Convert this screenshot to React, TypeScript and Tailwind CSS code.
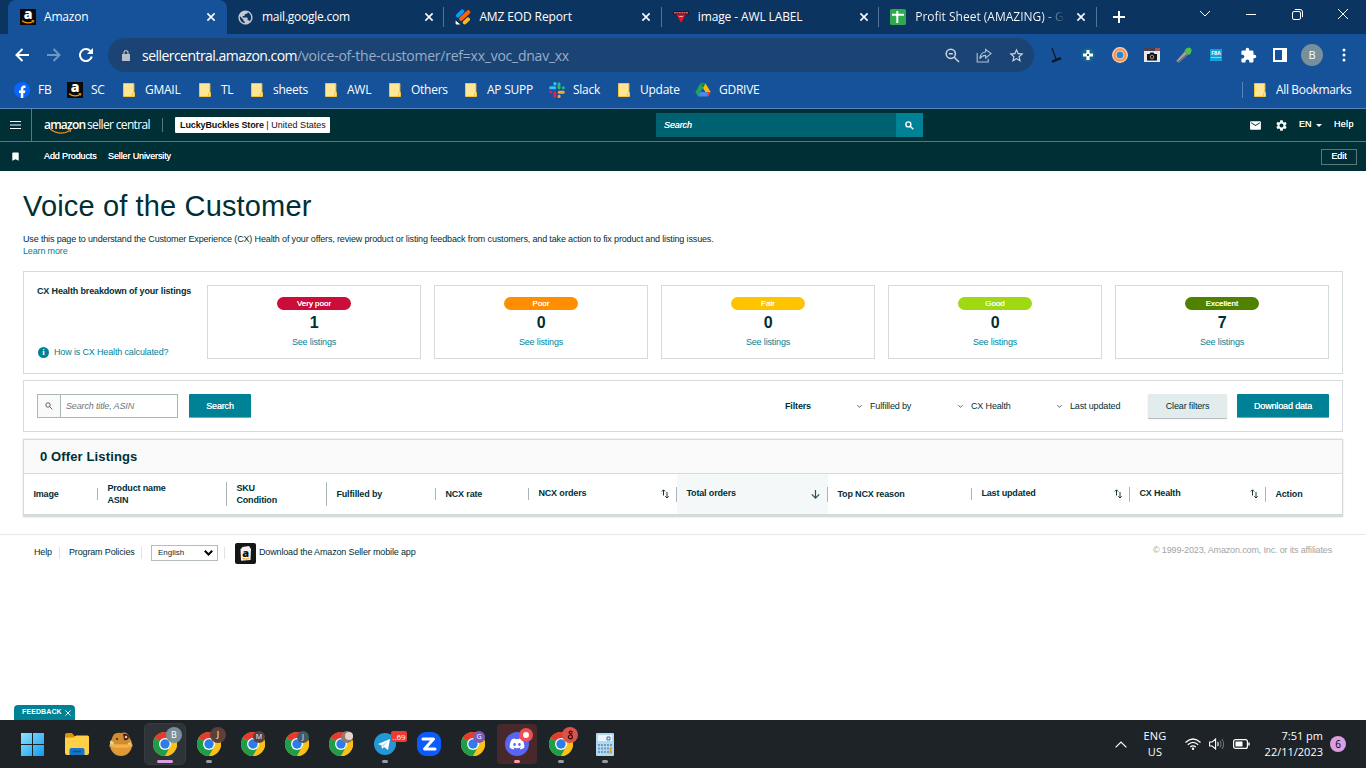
import type { ReactNode } from 'react'
import { MdStarBorder, MdExtension, MdEmail, MdSettings, MdBookmark, MdPublic } from 'react-icons/md'
import { FaDiscord } from 'react-icons/fa'

function AmazonIcon() {
    return (
        <svg width="16" height="16" viewBox="0 0 16 16">
            <rect width="16" height="16" fill="#0a0a0a" />
            <text x="8" y="10.4" textAnchor="middle" fontSize="14" fontWeight="800" fill="#fff" fontFamily="Open Sans, sans-serif">a</text>
            <path d="M2 11.8c3.6 2.6 8 2.6 11.4.4" stroke="#f90" strokeWidth="1.3" fill="none" />
            <path d="M11.6 11.6h2.4l-.6 2" stroke="#f90" strokeWidth="0.9" fill="none" />
        </svg>
    )
}

function FacebookIcon() {
    return (
        <svg width="16" height="16" viewBox="0 0 16 16">
            <circle cx="8" cy="8" r="8" fill="#0866ff" />
            <path d="M6.8 16v-5H5V8.6h1.8V7.3c0-2.6 1.3-3.7 3.2-3.7.7 0 1.2.1 1.5.2v2.1h-.9c-.9 0-1.3.4-1.3 1.2v1.5h2.1l-.4 2.4H9.3V16z" fill="#fff" />
        </svg>
    )
}

function JotformIcon() {
    return (
        <svg width="16" height="16" viewBox="0 0 16 16" strokeLinecap="round" strokeWidth="4">
            <path d="M3 6.6 7.2 2.4" stroke="#0a9bff" />
            <path d="M6.2 9.8 13.2 3.2" stroke="#ff6100" />
            <path d="M9.8 13.4 13 10.4" stroke="#ffb629" />
            <path d="M.6 11.6v3.2q0 .8.8.8h3.8z" fill="#fff" />
        </svg>
    )
}

function LabelIcon() {
    return (
        <svg width="16" height="16" viewBox="0 0 16 16">
            <path d="M0 2h16v3.500H0z" fill="#2b1220" />
            <path d="M1 3.7h14" stroke="#d8606a" strokeWidth="1.4" strokeDasharray="2 .4" />
            <path d="M3.4 5.5h9.2L8.2 14z" fill="#f0101c" />
            <path d="M6 7.5h4" stroke="#f8a0a0" />
        </svg>
    )
}

function SheetIcon() {
    return (
        <svg width="16" height="16" viewBox="0 0 16 16">
            <rect width="16" height="16" rx="1.6" fill="#2fa84f" />
            <path d="M2 5.8h12M7.3 2v12" stroke="#fff" strokeWidth="2" />
        </svg>
    )
}

function Folder() {
    return (
        <svg width="12" height="14" viewBox="0 0 12 14">
            <path d="M.5.5h10.4v9h.6v4H.5z" fill="#ffe694" stroke="#f0c544" />
            <path d="M9.5 10v3.5" stroke="#f0c544" />
        </svg>
    )
}

function SlackIcon() {
    return (
        <svg width="16" height="16" viewBox="0 0 16 16" strokeLinecap="round" strokeWidth="3">
            <path d="M1.6 5.7h4M5.9 1.6v.3" stroke="#36c5f0" />
            <path d="M10 1.7v4M14.3 5.8h.1" stroke="#2eb67d" />
            <path d="M10.3 10.2h4M10.1 14.3v.1" stroke="#ecb22e" />
            <path d="M5.9 10.4v4M1.7 10.1h.1" stroke="#e01e5a" />
        </svg>
    )
}

function DriveIcon() {
    return (
        <svg width="16" height="14" viewBox="0 0 16 14">
            <path d="M5.3.5 8 5 3 13.4.4 9z" fill="#1ea362" />
            <path d="M5.3.5h5.2L15.7 9h-5.3z" fill="#ffba00" />
            <path d="M5.3.5h5.2L8 5z" fill="#188038" />
            <path d="M5.5 9h10.2L13 13.5H3z" fill="#4688f4" />
            <path d="m12.8 13.4 2.9-4.4h-3.8z" fill="#ea4335" />
        </svg>
    )
}

function Close() {
    return (
        <svg width="10" height="10" viewBox="0 0 10 10">
            <path d="m1.4 1.4 7.2 7.2m0-7.2L1.4 8.6" stroke="#fff" strokeWidth="1.6" />
        </svg>
    )
}

function SearchGlyph({ size, color, width = 2 }: { size: number; color: string; width?: number }) {
    return (
        <svg width={size} height={size} viewBox="0 0 16 16" fill="none" stroke={color} strokeWidth={width}>
            <circle cx="6" cy="6" r="4.4" />
            <path d="m9.3 9.3 5.4 5.4" />
        </svg>
    )
}

const tabs = [
    { title: 'mail.google.com', icon: <MdPublic size={17} color="#c3c8ce" className="-ml-px" />, cls: 'tracking-[-0.02em]' },
    { title: 'AMZ EOD Report', icon: <JotformIcon />, cls: 'tracking-[-0.01em]' },
    { title: 'image - AWL LABEL', icon: <LabelIcon />, cls: '-mr-px ml-px tracking-[-0.01em]' },
    { title: 'Profit Sheet (AMAZING) - Go', icon: <SheetIcon />, cls: '-mr-px ml-px bg-linear-to-r from-white from-85% to-transparent bg-clip-text text-transparent' },
]

function TabStrip() {
    return (
        <div className="flex h-[34px] bg-[#0c3461] pl-2 text-[12px] text-white">
            <div className="flex w-[219px] items-center rounded-t-lg bg-[#15529a] pl-3">
                <AmazonIcon />
                <span className="ml-2 w-[162px] tracking-[-0.2px]">Amazon</span>
                <Close />
            </div>
            {tabs.map((t) => (
                <div key={t.title} className="flex w-[217.4px] items-center pl-[11px]">
                    <span className="flex w-6 shrink-0">{t.icon}</span>
                    <span className={'w-[150px] shrink-0 overflow-hidden whitespace-nowrap ' + t.cls}>{t.title}</span>
                    <span className="ml-3"><Close /></span>
                    <span className="ml-auto h-5 w-px bg-[#53749a]" />
                </div>
            ))}
            <div className="flex w-11 items-center justify-center">
                <svg width="12" height="12" viewBox="0 0 12 12"><path d="M6 0v12M0 6h12" stroke="#fff" strokeWidth="2" /></svg>
            </div>
            <div className="ml-auto flex h-7 items-center">
                <div className="flex w-[46px] justify-center">
                    <svg width="12" height="8" viewBox="0 0 12 8" fill="none" stroke="#fff"><path d="m1 1 5 5 5-5" /></svg>
                </div>
                <div className="flex w-[46px] justify-center"><span className="h-px w-[10px] bg-white" /></div>
                <div className="flex w-[46px] justify-center">
                    <svg width="11" height="11" viewBox="0 0 11 11" fill="none" stroke="#fff">
                        <rect x=".5" y="2.5" width="8" height="8" rx="1.5" />
                        <path d="M2.8.5H8Q10.5.5 10.5 3v5.2" />
                    </svg>
                </div>
                <div className="flex w-[46px] justify-center">
                    <svg width="12" height="12" viewBox="0 0 12 12" stroke="#fff"><path d="m1 1 10 10M11 1 1 11" /></svg>
                </div>
            </div>
        </div>
    )
}

function Slot({ children }: { children: ReactNode }) {
    return <div className="flex w-8 shrink-0 items-center justify-center">{children}</div>
}

function Toolbar() {
    return (
        <div className="flex h-[42px] items-center pl-1.5">
            <Slot>
                <svg width="14" height="14" viewBox="0 0 14 14" fill="none" stroke="#fff" strokeWidth="2"><path d="M14 7H1.5M7.5 1 1.5 7l6 6" /></svg>
            </Slot>
            <Slot>
                <svg width="14" height="14" viewBox="0 0 14 14" fill="none" stroke="#6f97c5" strokeWidth="2"><path d="M0 7h12.5M6.5 1l6 6-6 6" /></svg>
            </Slot>
            <Slot>
                <svg width="14" height="14" viewBox="0 0 14 14" fill="none" stroke="#fff" strokeWidth="2"><path d="M11.4 3A6 6 0 1 0 12.8 8.6" /><path d="M14 0v6H8z" fill="#fff" stroke="none" /></svg>
            </Slot>
            <div className="ml-1.5 flex h-[34px] w-[926px] items-center rounded-full bg-[#1b4474] pl-[14px]">
                <svg width="8" height="11" viewBox="0 0 8 11"><path d="M0 4h8v7H0z" fill="#b9bfc6" /><path d="M2 4.5V2.6a2 2 0 0 1 4 0v1.9" fill="none" stroke="#b9bfc6" strokeWidth="1.2" /></svg>
                <span className="ml-3 text-[14px] tracking-[-0.54px] text-white">sellercentral.amazon.com</span>
                <span className="text-[14px] tracking-[-0.24px] text-[#98adc7]">/voice-of-the-customer/ref=xx_voc_dnav_xx</span>
                <div className="mr-0.5 ml-auto flex">
                    <Slot>
                        <svg width="15" height="15" viewBox="0 0 15 15" fill="none" stroke="#ccd5e0" strokeWidth="1.5"><circle cx="5.8" cy="5.8" r="4.6" /><path d="m9.2 9.2 4.8 4.8M3.8 5.8h4" /></svg>
                    </Slot>
                    <Slot>
                        <svg width="16" height="15" viewBox="0 0 16 15" fill="none" stroke="#b4c2d2" strokeWidth="1.1"><path d="M1.2 5v9h11v-3.2" /><path d="M9.6 1.4 15 5.6 9.6 10V7.4Q6 7.2 3.8 10.8 4.2 4.6 9.6 4z" /></svg>
                    </Slot>
                    <Slot><MdStarBorder size={17} color="#ccd5e0" /></Slot>
                </div>
            </div>
            <div className="ml-1.5 flex">
                <Slot>
                    <svg width="14" height="15" viewBox="0 0 14 15" fill="none" stroke="#0b1626"><path d="M3 0l4 11" strokeWidth="1.2" /><path d="m3 13.6 9-3.4" strokeWidth="2.4" /></svg>
                </Slot>
                <Slot>
                    <svg width="14" height="14" viewBox="0 0 14 14"><circle cx="7" cy="7" r="7" fill="#17648a" /><path d="M7 2v10M2 7h10" stroke="#fff" strokeWidth="3.2" /><path d="M6 6h2v2H6z" fill="#17648a" /></svg>
                </Slot>
                <Slot>
                    <svg width="16" height="16" viewBox="0 0 16 16"><circle cx="8" cy="8" r="7.3" fill="#f79250" stroke="#fbd3b8" strokeWidth="1.3" /><circle cx="8" cy="8" r="4" fill="#1b8be0" stroke="#fdc9a4" /></svg>
                </Slot>
                <Slot>
                    <svg width="16" height="14" viewBox="0 0 16 14"><rect width="16" height="14" fill="#e8e8e8" /><path d="M0 0h16v3H0z" fill="#494050" /><path d="M11 0h5v3h-5z" fill="#a4545c" /><path d="M3 6h2.5l1-1.4h3l1 1.4H13v6.4H3z" fill="#151515" /><circle cx="8" cy="9" r="1.8" fill="none" stroke="#bbb" strokeWidth=".8" /></svg>
                </Slot>
                <Slot>
                    <svg width="16" height="16" viewBox="0 0 16 16"><path d="m.3 14 8.5-9.5 3.2 3-9.5 8.3z" fill="#a7a29d" /><path d="m1.5 15.3 9.5-8" stroke="#5b5650" /><path d="M8.5 4Q10 .4 13 .4 16 1 15.6 4 15 7 12.3 8z" fill="#4fc14a" /></svg>
                </Slot>
                <Slot>
                    <div className="h-3 w-3 bg-[#13a0d8] text-center text-[5px] leading-[8px] font-bold text-white">FBA<div className="mx-px h-px bg-[#8ad2ee]" /></div>
                </Slot>
                <Slot><MdExtension size={17} color="#fff" /></Slot>
                <Slot>
                    <svg width="14" height="14" viewBox="0 0 14 14"><path d="M1 1h12v12H1z" fill="none" stroke="#fff" strokeWidth="2" /><path d="M9 0h5v14H9z" fill="#fff" /></svg>
                </Slot>
                <Slot>
                    <div className="h-[22px] w-[22px] rounded-full bg-[#78909c] text-center text-[11px] leading-[22px] text-white">B</div>
                </Slot>
                <Slot>
                    <svg width="4" height="14" viewBox="0 0 4 14" fill="#fff"><circle cx="2" cy="2" r="1.5" /><circle cx="2" cy="7" r="1.5" /><circle cx="2" cy="12" r="1.5" /></svg>
                </Slot>
            </div>
        </div>
    )
}

const bookmarks = [
    { label: 'FB', icon: <FacebookIcon />, w: 'w-[53px]', iw: 'w-6' },
    { label: 'SC', icon: <AmazonIcon />, w: 'w-[56px]', iw: 'w-6' },
    { label: 'GMAIL', icon: <Folder />, w: 'w-[76px]', iw: 'w-[22px]' },
    { label: 'TL', icon: <Folder />, w: 'w-[52px]', iw: 'w-[22px]' },
    { label: 'sheets', icon: <Folder />, w: 'w-[74px]', iw: 'w-[22px]' },
    { label: 'AWL', icon: <Folder />, w: 'w-[64px]', iw: 'w-[22px]' },
    { label: 'Others', icon: <Folder />, w: 'w-[76px]', iw: 'w-[22px]' },
    { label: 'AP SUPP', icon: <Folder />, w: 'w-[84px]', iw: 'w-[22px]' },
    { label: 'Slack', icon: <SlackIcon />, w: 'w-[69px]', iw: 'w-6' },
    { label: 'Update', icon: <Folder />, w: 'w-[77px]', iw: 'w-[22px]' },
    { label: 'GDRIVE', icon: <DriveIcon />, w: 'w-[80px]', iw: 'w-6' },
]

function Bookmarks() {
    return (
        <div className="flex h-[33px] items-center border-b border-[#5b86b9] pb-1 pl-[14px] text-[12px] tracking-[-0.25px] text-white">
            {bookmarks.map((b) => (
                <div key={b.label} className={'flex shrink-0 items-center whitespace-nowrap ' + b.w}>
                    <span className={'flex shrink-0 ' + b.iw}>{b.icon}</span>
                    {b.label}
                </div>
            ))}
            <div className="ml-auto flex w-[124px] items-center">
                <span className="h-4 w-px bg-[#5b86b9]" />
                <span className="ml-[11px] w-[22px]"><Folder /></span>
                <span className="tracking-[-0.35px] whitespace-nowrap">All Bookmarks</span>
            </div>
        </div>
    )
}

function SellerHeader() {
    return (
        <div className="bg-[#002f36] text-[9px] tracking-[-0.12px] text-white">
            <div className="flex h-[33px] items-center border-b border-[#5a777b]">
                <div className="flex h-full w-8 items-center border-r border-[#5a777b] pl-2.5">
                    <svg width="11" height="8" viewBox="0 0 11 8" stroke="#fff"><path d="M0 .5h11M0 4h11M0 7.5h11" /></svg>
                </div>
                <div className="relative ml-3 flex w-[118px] items-center font-['Open_Sans',sans-serif] text-[12px] leading-4 whitespace-nowrap">
                    <span className="w-[43px] font-semibold tracking-[-0.8px]">amazon</span>
                    <span className="tracking-[-0.65px]">seller central</span>
                    <svg className="absolute top-[11px] left-1.5" width="23" height="7" viewBox="0 0 23 7" fill="none" stroke="#f09020">
                        <path d="M0 1q10 7.5 20 1.5" strokeWidth="1.3" />
                        <path d="M17.5 1.5 21 1l-.8 3" />
                    </svg>
                </div>
                <span className="h-[14px] w-px bg-[#5a777b]" />
                <div className="ml-3 h-4 w-[155px] rounded-[1px] bg-white pl-[5px] leading-4 whitespace-nowrap text-[#111]">
                    <b>LuckyBuckles Store</b> <span className="tracking-[0.05px]">| United States</span>
                </div>
                <div className="ml-[326px] flex h-6 w-[267px] items-center bg-[#006170] text-[9px] italic">
                    <span className="w-60 pt-px pl-2 [text-shadow:0_0_0.5px_#fff]">Search</span>
                    <span className="flex h-full w-[27px] items-center justify-center bg-[#008296]"><SearchGlyph size={9} color="#fff" width={2.5} /></span>
                </div>
                <div className="ml-auto flex items-center whitespace-nowrap">
                    <span className="w-[26px]"><MdEmail size={13} /></span>
                    <span className="w-6"><MdSettings size={13} /></span>
                    <span className="w-[17px] [text-shadow:0_0_0.5px_#fff]">EN</span>
                    <svg width="6" height="3" viewBox="0 0 6 3" fill="#fff"><path d="M0 0h6L3 3z" /></svg>
                    <span className="ml-3 w-8 tracking-[0.3px] text-[#fffbe9] [text-shadow:0_0_0.5px_#fff]">Help</span>
                </div>
            </div>
            <div className="flex h-[29px] items-center whitespace-nowrap">
                <span className="w-11 pl-2.5"><MdBookmark size={11} /></span>
                <span className="w-16 pt-px [text-shadow:0_0_0.5px_#fff]">Add Products</span>
                <span className="pt-px [text-shadow:0_0_0.5px_#fff]">Seller University</span>
                <span className="mr-[9px] ml-auto flex h-4 w-9 items-center justify-center border border-[#5a777b] pt-px [text-shadow:0_0_0.5px_#fff]">Edit</span>
            </div>
        </div>
    )
}

const health = [
    { label: 'Very poor', count: 1, color: 'bg-[#cc0c39]' },
    { label: 'Poor', count: 0, color: 'bg-[#ff8f00]' },
    { label: 'Fair', count: 0, color: 'bg-[#ffc400]' },
    { label: 'Good', count: 0, color: 'bg-[#a0d911]' },
    { label: 'Excellent', count: 7, color: 'bg-[#508200]' },
]

function HealthCard() {
    return (
        <div className="flex h-[103px] border border-[#d5dbdb] py-[13px] pl-[13px]">
            <div className="flex w-[170px] flex-col justify-between">
                <b className="leading-[13px] whitespace-nowrap">CX Health breakdown of your listings</b>
                <div className="mb-px flex items-center text-[#008296]">
                    <span className="mr-[5px] ml-px h-[11px] w-[11px] rounded-full bg-[#008296] text-center font-['Liberation_Serif',serif] text-[9px] leading-[11px] font-bold text-white">i</span>
                    How is CX Health calculated?
                </div>
            </div>
            <div className="flex gap-[13px]">
                {health.map((h) => (
                    <div key={h.label} className="flex h-[74px] w-[214px] flex-col items-center border border-[#d5dbdb] pt-[11px]">
                        <span className={'h-[13px] w-[74px] rounded-full text-center text-[8px] leading-[13px] tracking-normal text-white [text-shadow:0_0_0.5px_#fff] ' + h.color}>{h.label}</span>
                        <span className="mt-[3px] text-[16px] leading-5 font-bold">{h.count}</span>
                        <span className="mt-[3px] leading-[13px] text-[#008296]">See listings</span>
                    </div>
                ))}
            </div>
        </div>
    )
}

function Chevron() {
    return <svg className="mr-2" width="5" height="3" viewBox="0 0 5 3" fill="none" stroke="#4d6a6e"><path d="m.3.3 2.2 1.9L4.7.3" /></svg>
}

function FilterCard() {
    return (
        <div className="mt-1.5 flex h-[52px] items-center border border-[#d5dbdb] px-[13px] whitespace-nowrap">
            <div className="flex h-6 w-[141px] border border-[#aab7b8]">
                <span className="flex w-[23px] items-center justify-center border-r border-[#aab7b8] bg-[#fafafa]"><SearchGlyph size={8} color="#44595c" width={1.8} /></span>
                <span className="pl-[5px] leading-[23px] text-[#6c7778] italic">Search title, ASIN</span>
            </div>
            <div className="ml-[11px] h-6 w-[62px] rounded-[1px] border-b border-[#7fa9ad] bg-[#008296] text-center leading-[24px] text-white [text-shadow:0_0_0.5px_#fff]">Search</div>
            <b className="ml-[534px] w-[72px] pt-px">Filters</b>
            <div className="flex w-[101px] items-center pt-px"><Chevron />Fulfilled by</div>
            <div className="flex w-[99px] items-center pt-px"><Chevron />CX Health</div>
            <div className="flex items-center pt-px"><Chevron />Last updated</div>
            <div className="ml-auto h-6 w-[79px] rounded-[1px] bg-[#e3eced] text-center leading-[24px] shadow-[0_1px_1px_#aab7b8]">Clear filters</div>
            <div className="ml-[10px] h-6 w-[92px] rounded-[1px] border-b border-[#7fa9ad] bg-[#008296] text-center leading-[24px] text-white [text-shadow:0_0_0.5px_#fff]">Download data</div>
        </div>
    )
}

function SortBoth() {
    return (
        <svg width="8" height="10" viewBox="0 0 8 10" fill="none" stroke="#16373c" strokeWidth="1">
            <path d="M2.5 6.5V1M.8 2.5 2.5.8l1.7 1.7M6 3v6M4.3 7.3 6 9l1.7-1.7" />
        </svg>
    )
}

function SortDown() {
    return (
        <svg width="9" height="9" viewBox="0 0 9 9" fill="none" stroke="#1d5560" strokeWidth="1.2">
            <path d="M4.5 0v8M.8 4.3l3.7 3.8 3.7-3.8" />
        </svg>
    )
}

const columns = [
    { lines: ['Image'], w: 'w-[74px]', sep: 'h-3' },
    { lines: ['Product name', 'ASIN'], w: 'w-[129px]', sep: 'h-6' },
    { lines: ['SKU', 'Condition'], w: 'w-[100px]', sep: 'h-6' },
    { lines: ['Fulfilled by'], w: 'w-[109px]', sep: 'h-3' },
    { lines: ['NCX rate'], w: 'w-[93px]', sep: 'h-3' },
    { lines: ['NCX orders'], w: 'w-[148px]', sep: 'h-[15px]', sort: <SortBoth /> },
    { lines: ['Total orders'], w: 'w-[151px] bg-[#f4f8f9]', sep: 'h-[15px]', sort: <SortDown /> },
    { lines: ['Top NCX reason'], w: 'w-[144px]', sep: 'h-3' },
    { lines: ['Last updated'], w: 'w-[158px]', sep: 'h-[15px]', sort: <SortBoth /> },
    { lines: ['CX Health'], w: 'w-[136px]', sep: 'h-[15px]', sort: <SortBoth /> },
    { lines: ['Action'], w: 'w-[76px]', sep: '' },
]

function Listings() {
    return (
        <div className="mt-[7px] h-[78px] border border-b-[3px] border-[#d5dbdb] shadow-[0_0_2px_#d5dbdb]">
            <div className="h-[34px] border-b border-[#d5dbdb] bg-[#fafafa] pl-4 text-[13px] leading-[33px] font-bold tracking-[0.13px]">0 Offer Listings</div>
            <div className="flex h-10 font-bold">
                {columns.map((c) => (
                    <div key={c.lines[0]} className={'flex shrink-0 items-center pl-[9.4px] ' + c.w}>
                        <div className={'leading-3 whitespace-nowrap ' + (c.sort ? 'pb-0.5' : '')}>
                            {c.lines.map((l) => <div key={l}>{l}</div>)}
                        </div>
                        <span className="mr-[7px] ml-auto">{c.sort}</span>
                        {c.sep && <span className={'w-px bg-[#aab7b8] ' + c.sep} />}
                    </div>
                ))}
            </div>
        </div>
    )
}

function Footer() {
    return (
        <div className="mt-[17px] flex h-[37px] items-center border-t border-[#e7e9e9] pl-[34px] whitespace-nowrap">
            <span className="w-[25px]">Help</span>
            <span className="h-3 w-px bg-[#dfe3e3]" />
            <span className="ml-[9px] w-[72px]">Program Policies</span>
            <span className="h-3 w-px bg-[#dfe3e3]" />
            <div className="ml-[9px] flex h-4 w-[67px] items-center justify-between border border-[#b5bcbc] pr-1 pl-1.5 text-[8px] tracking-normal">
                English
                <svg width="9" height="6" viewBox="0 0 9 6" fill="none" stroke="#000" strokeWidth="2"><path d="m.8.8 3.7 3.7L8.2.8" /></svg>
            </div>
            <span className="ml-1.5 h-3 w-px bg-[#dfe3e3]" />
            <svg className="ml-2.5" width="21" height="21" viewBox="0 0 21 21">
                <rect width="21" height="21" rx="2" fill="#161616" />
                <path d="m5.5 6.5 2-2.5L14 3l2 3-.5 11-9.5.8z" fill="#f2f2f2" />
                <text x="10.5" y="14" textAnchor="middle" fontSize="11" fontWeight="800" fill="#111" fontFamily="Open Sans, sans-serif">a</text>
                <path d="M7.5 15.5q3 1.5 6.5 0" stroke="#f90" fill="none" />
            </svg>
            <span className="ml-[3px]">Download the Amazon Seller mobile app</span>
            <span className="mr-[34px] ml-auto pb-1 text-[#a0a5a6]">© 1999-2023, Amazon.com, Inc. or its affiliates</span>
        </div>
    )
}

function ChromeIcon() {
    return (
        <svg width="24" height="24" viewBox="0 0 24 24">
            <circle cx="12" cy="12" r="12" fill="#fbc116" />
            <path d="M12 12 1.6 6A12 12 0 0 1 22.4 6z" fill="#e33b2e" />
            <path d="M1.6 6A12 12 0 0 0 12 24l5.2-9-5.2-3z" fill="#1f9d49" />
            <path d="M12 6h10.4A12 12 0 0 1 12 24l5.2-9z" fill="#fbc116" />
            <circle cx="12" cy="12" r="6" fill="#fff" />
            <circle cx="12" cy="12" r="4.7" fill="#2b7de9" />
        </svg>
    )
}

function TaskItem({ children, badge, box = '', bar = '' }: { children: ReactNode; badge?: ReactNode; box?: string; bar?: string }) {
    return (
        <div className="flex w-11 justify-center">
            <div className={'relative flex h-10 w-10 items-center justify-center rounded ' + box}>
                {children}
                {badge}
                {bar && <span className={'absolute bottom-[1px] h-[3px] rounded-full ' + bar} />}
            </div>
        </div>
    )
}

function Badge({ children, cls }: { children: ReactNode; cls: string }) {
    return <span className={'absolute flex items-center justify-center rounded-full text-white ' + cls}>{children}</span>
}

const big = 'top-[3px] right-[3px] h-4 w-4 text-[9px] '
const small = 'top-[7px] right-2 h-3 w-3 text-[7px] '

function Taskbar() {
    return (
        <div className="flex h-12 items-center bg-[#1e2328] pl-[11px] font-['Open_Sans','Noto_Sans',sans-serif] text-white">
            <TaskItem>
                <svg className="mr-px" width="23" height="23" viewBox="0 0 23 23">
                    <defs><linearGradient id="win" x1="0" y1="0" x2="1" y2="1"><stop stopColor="#8fe3ff" /><stop offset="1" stopColor="#0f9bf2" /></linearGradient></defs>
                    <path d="M0 0h11v11H0zM12 0h11v11H12zM0 12h11v11H0zM12 12h11v11H12z" fill="url(#win)" />
                </svg>
            </TaskItem>
            <TaskItem>
                <svg width="24" height="22" viewBox="0 0 24 22">
                    <path d="M0 2q0-2 2-2h5l2.5 3H22q2 0 2 2v5H0z" fill="#d99400" />
                    <path d="M0 4.5h9L11 2.6h11.5q1.5 0 1.5 1.5V20q0 2-2 2H2q-2 0-2-2z" fill="#ffd048" />
                    <path d="M4.5 22v-5q0-2 2-2h11q2 0 2 2v5z" fill="#1476c8" />
                    <path d="M8 18.5h8" stroke="#0c5291" strokeWidth="1.5" />
                </svg>
            </TaskItem>
            <TaskItem>
                <svg width="24" height="24" viewBox="0 0 24 24">
                    <circle cx="12" cy="13" r="11" fill="#e09a35" />
                    <path d="M3 7Q4-.5 12 1q7-2.5 8.5 5L21 12H3z" fill="#d08a30" />
                    <path d="M1 9q3-1 4.5 4H1zM19 11q3-2 4 3h-4z" fill="#cbd99a" />
                    <path d="M14 2q5-1 6 3-1 4-5 3z" fill="#4a2018" />
                    <circle cx="17" cy="5" r="1.3" fill="#e9c2b5" />
                    <path d="M7 7h2" stroke="#3a2010" strokeWidth="1.5" />
                    <path d="M.5 12.5h23v2q-11.5 3-23 0z" fill="#f2b046" />
                </svg>
            </TaskItem>
            <TaskItem box="bg-[#2e3338] outline outline-[#373c41]" bar="w-4 bg-[#d99fe0]" badge={<Badge cls={big + 'bg-[#78909c]'}>B</Badge>}><ChromeIcon /></TaskItem>
            <TaskItem bar="w-1.5 bg-[#9a9c9e]" badge={<Badge cls={big + 'bg-[#5d4037]'}>J</Badge>}><ChromeIcon /></TaskItem>
            <TaskItem badge={<Badge cls={small + 'bg-[#5d4037]'}>M</Badge>}><ChromeIcon /></TaskItem>
            <TaskItem badge={<Badge cls={small + 'bg-[#455a64]'}>J</Badge>}><ChromeIcon /></TaskItem>
            <TaskItem badge={<Badge cls={small + 'bg-[#8d7a72]'}><span className="mb-0.5 ml-1 h-2 w-2 rounded-full bg-[#e6d3cb]" /></Badge>}><ChromeIcon /></TaskItem>
            <TaskItem bar="w-1.5 bg-[#9a9c9e]" badge={<span className="absolute top-[7px] -right-0.5 h-[11px] w-4 rounded-[2px] bg-[#ef3a33] text-center text-[8px] leading-[11px]">..69</span>}>
                <svg className="mr-px" width="22" height="22" viewBox="0 0 22 22"><circle cx="11" cy="11" r="11" fill="#2298d4" /><path d="m4 11 12-5-2 11-4-3-2 2-.5-3.5z" fill="#fff" /><path d="m7.5 12.5 6-4-4 5z" fill="#b8d9ec" /></svg>
            </TaskItem>
            <TaskItem>
                <svg width="24" height="24" viewBox="0 0 24 24"><rect width="24" height="24" rx="9" fill="#0b5cff" /><path d="M6 7h10.5L7.5 17H18" fill="none" stroke="#fff" strokeWidth="3" strokeLinejoin="round" strokeLinecap="round" /></svg>
            </TaskItem>
            <TaskItem badge={<Badge cls={small + 'bg-[#7e57c2]'}>G</Badge>}><ChromeIcon /></TaskItem>
            <TaskItem box="bg-[#47282b]" bar="w-1.5 bg-[#ff99a4]" badge={<Badge cls="top-1 right-1 h-[14px] w-[14px] bg-[#ef4f53]"><span className="h-1.5 w-1.5 rounded-full bg-white" /></Badge>}>
                <span className="flex h-6 w-6 items-center justify-center rounded-full bg-[#5865f2]"><FaDiscord size={16} /></span>
            </TaskItem>
            <TaskItem bar="w-1.5 bg-[#9a9c9e]" badge={
                <Badge cls="top-[3px] right-[3px] h-4 w-4 bg-[#d9534a]">
                    <svg width="7" height="10" viewBox="0 0 8 12" fill="none" stroke="#2a0d0d" strokeWidth="1.5"><path d="M6.5 2.5Q2 0 2.5 3.5L6 7q1 4-3 3.500Q.5 9 2 7L6 4" /></svg>
                </Badge>
            }><ChromeIcon /></TaskItem>
            <TaskItem bar="w-1.5 bg-[#9a9c9e]">
                <svg className="mr-px" width="18" height="23" viewBox="0 0 18 23">
                    <rect width="18" height="23" rx="1" fill="#b4d9ef" />
                    <rect x="2" y="2" width="14" height="6" fill="#e8f6fd" />
                    <path d="M11 4h3v3h-3z" fill="none" stroke="#3c6f98" />
                    <path d="M2 12h14M2 15.5h14M2 19h14" stroke="#6ba0c6" strokeWidth="2" strokeDasharray="2 1" />
                    <path d="M14.5 15v6" stroke="#f0a030" strokeWidth="2" />
                </svg>
            </TaskItem>
            <div className="ml-auto flex items-center text-[11px] leading-4">
                <svg width="12" height="7" viewBox="0 0 12 7" fill="none" stroke="#fff" strokeWidth="1.2"><path d="M.6 6.4 6 1l5.4 5.4" /></svg>
                <div className="ml-3 w-8 text-center tracking-[0.2px]">ENG<br />US</div>
                <svg className="ml-[14px]" width="16" height="12" viewBox="0 0 16 12" fill="none" stroke="#fff" strokeWidth="1.2">
                    <path d="M.5 4.5Q8-2.5 15.5 4.5M2.8 6.7q5.2-4.7 10.4 0M5.2 9q2.8-2.4 5.6 0" /><circle cx="8" cy="10.7" r="1.2" fill="#fff" stroke="none" />
                </svg>
                <svg className="ml-2" width="16" height="12" viewBox="0 0 16 12" fill="none" stroke="#fff" strokeWidth="1.1">
                    <path d="M.6 4h2.6L6.6 1v10L3.2 8H.6zM8.6 4q1.2 2 0 4" /><path d="M10.8 2.6q2.4 3.4 0 6.8M13 1q3.200 5 0 10" stroke="#6c7074" />
                </svg>
                <svg className="ml-2" width="17" height="10" viewBox="0 0 17 10"><rect x=".6" y=".6" width="13.8" height="8.8" rx="2" fill="none" stroke="#fff" strokeWidth="1.2" /><path d="M2.5 2.5h7v5h-7zM15.2 3.5h1.5v3h-1.5z" fill="#fff" /></svg>
                <div className="ml-3 w-[61px] text-right whitespace-nowrap">7:51 pm<br />22/11/2023</div>
                <span className="mr-5 ml-[7px] flex h-4 w-4 items-center justify-center rounded-full bg-[#d99fe0] text-[10px] text-black">6</span>
            </div>
        </div>
    )
}

export default function App() {
    return (
        <div className="flex h-[768px] w-[1366px] flex-col overflow-hidden bg-white font-['Liberation_Sans',Arial,sans-serif]">
            <div className="bg-[#15529a] font-['Open_Sans','Noto_Sans',sans-serif]">
                <TabStrip />
                <Toolbar />
                <Bookmarks />
            </div>
            <SellerHeader />
            <main className="flex flex-1 flex-col text-[9px] tracking-[-0.15px] text-[#002f36]">
                <div className="px-[23px]">
                    <h1 className="mt-[17px] text-[29px] leading-9 tracking-[0.15px]">Voice of the Customer</h1>
                    <p className="mt-[9px] leading-3 whitespace-nowrap">Use this page to understand the Customer Experience (CX) Health of your offers, review product or listing feedback from customers, and take action to fix product and listing issues.</p>
                    <p className="mb-[14px] leading-3 text-[#008296]">Learn more</p>
                    <HealthCard />
                    <FilterCard />
                    <Listings />
                </div>
                <Footer />
                <div className="mt-auto ml-[14px] flex h-[15px] w-[61px] items-center rounded-t-sm bg-[#008296] pl-2 text-[7px] font-bold tracking-[0.1px] text-white">
                    FEEDBACK
                    <svg className="ml-[3px]" width="6" height="6" viewBox="0 0 6 6" stroke="#fff"><path d="m.5.5 5 5m0-5-5 5" /></svg>
                </div>
            </main>
            <Taskbar />
        </div>
    )
}
